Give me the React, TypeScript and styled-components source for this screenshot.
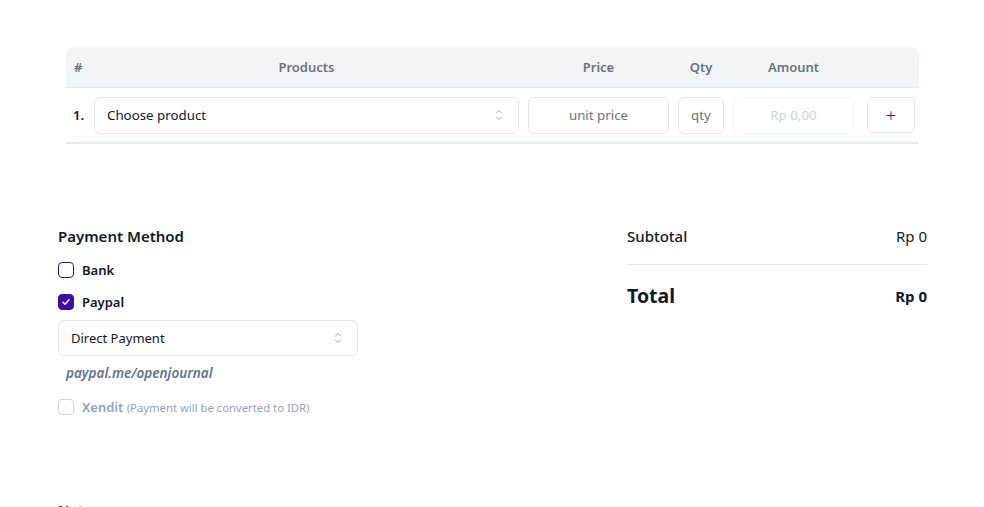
import styled, { createGlobalStyle } from "styled-components";

const GlobalStyle = createGlobalStyle`
  * { box-sizing: border-box; }
  body {
    margin: 0;
    background: #fff;
    font-family: "Noto Sans", "Open Sans", Arial, sans-serif;
    color: #111827;
  }
`;

const Chevrons = () => (
  <svg width="10" height="14" viewBox="0 0 10 14" fill="none">
    <path d="M2.5 5 L5 2.5 L7.5 5" stroke="#9ca3af" strokeWidth="1" strokeLinecap="round" strokeLinejoin="round" />
    <path d="M2.5 9 L5 11.5 L7.5 9" stroke="#9ca3af" strokeWidth="1" strokeLinecap="round" strokeLinejoin="round" />
  </svg>
);

const Check = () => (
  <svg width="12" height="12" viewBox="0 0 12 12" fill="none">
    <path d="M3 6.3 L5 8.3 L9 3.8" stroke="#fff" strokeWidth="1.4" strokeLinecap="round" strokeLinejoin="round" />
  </svg>
);

export default function App() {
  return (
    <Page>
      <GlobalStyle />
      <Table>
        <HeadRow>
          <HeadCell align="left">#</HeadCell>
          <HeadCell>Products</HeadCell>
          <HeadCell>Price</HeadCell>
          <HeadCell>Qty</HeadCell>
          <HeadCell>Amount</HeadCell>
          <HeadCell />
        </HeadRow>
        <BodyRow>
          <RowNum>1.</RowNum>
          <SelectBox>
            <span>Choose product</span>
            <Chevrons />
          </SelectBox>
          <Field placeholder="unit price" />
          <Field placeholder="qty" />
          <Field placeholder="Rp 0,00" disabled />
          <AddCell>
            <AddButton>+</AddButton>
          </AddCell>
        </BodyRow>
      </Table>

      <Bottom>
        <PaymentCol>
          <SectionTitle>Payment Method</SectionTitle>
          <CheckRow>
            <Box />
            <CheckLabel>Bank</CheckLabel>
          </CheckRow>
          <CheckRow>
            <Box checked>
              <Check />
            </Box>
            <CheckLabel>Paypal</CheckLabel>
          </CheckRow>
          <PaySelect>
            <span>Direct Payment</span>
            <Chevrons />
          </PaySelect>
          <PaypalLink>paypal.me/openjournal</PaypalLink>
          <CheckRow>
            <Box disabled />
            <CheckLabel disabled>
              Xendit <Note>(Payment will be converted to IDR)</Note>
            </CheckLabel>
          </CheckRow>
        </PaymentCol>

        <TotalsCol>
          <SumRow>
            <span>Subtotal</span>
            <span>Rp 0</span>
          </SumRow>
          <Divider />
          <TotalRow>
            <TotalLabel>Total</TotalLabel>
            <TotalValue>Rp 0</TotalValue>
          </TotalRow>
        </TotalsCol>
      </Bottom>

      <NotesLabel>Notes</NotesLabel>
    </Page>
  );
}

const Page = styled.div`
  padding: 47px 57px 40px 58px;
`;

const Table = styled.div`
  margin: 0 8px;
  border-bottom: 2px solid #e2e8f0;
`;

const grid = `
  display: grid;
  grid-template-columns: 19px 425px 141px 46px 121px 1fr;
  column-gap: 9px;
  align-items: center;
`;

const HeadRow = styled.div`
  ${grid}
  height: 41px;
  background: #f1f5f9;
  border-bottom: 1px solid #e2e8f0;
  border-radius: 8px 8px 0 0;
`;

const HeadCell = styled.div<{ align?: string }>`
  text-align: ${(p) => p.align || "center"};
  padding-left: ${(p) => (p.align === "left" ? "8px" : "0")};
  font-size: 13px;
  font-weight: 600;
  color: #6b7280;
  line-height: 20px;
  margin-top: -1px;
`;

const BodyRow = styled.div`
  ${grid}
  height: 54px;
`;

const RowNum = styled.div`
  padding-left: 7px;
  font-size: 13px;
  font-weight: 600;
  color: #111827;
  white-space: nowrap;
`;

const SelectBox = styled.div`
  height: 37px;
  display: flex;
  align-items: center;
  justify-content: space-between;
  padding: 0 14px 0 12px;
  border: 1px solid #e2e8f0;
  border-radius: 6px;
  font-size: 13.3px;
  color: #111827;
`;

const Field = styled.input`
  width: 100%;
  height: 37px;
  border: 1px solid ${(p) => (p.disabled ? "#f1f5f9" : "#e2e8f0")};
  border-radius: 6px;
  background: #fff;
  text-align: center;
  font-family: inherit;
  font-size: 13.3px;
  outline: none;
  &::placeholder {
    color: ${(p) => (p.disabled ? "#cbd5e1" : "#6b7280")};
  }
`;

const AddCell = styled.div`
  padding: 0 4px;
`;

const AddButton = styled.button`
  width: 48px;
  height: 36px;
  border: 1px solid #e2e8f0;
  border-radius: 6px;
  background: #fff;
  color: #3b0ea3;
  font-family: inherit;
  font-size: 18px;
  font-weight: 300;
  line-height: 1;
  cursor: pointer;
`;

const Bottom = styled.div`
  display: flex;
  justify-content: space-between;
  margin-top: 81px;
`;

const PaymentCol = styled.div`
  width: 300px;
  display: flex;
  flex-direction: column;
`;

const SectionTitle = styled.div`
  font-size: 15px;
  font-weight: 600;
  line-height: 22px;
  margin-bottom: 7px;
`;

const CheckRow = styled.div`
  display: flex;
  align-items: center;
  gap: 8px;
  height: 32px;
`;

const Box = styled.div<{ checked?: boolean; disabled?: boolean }>`
  width: 16px;
  height: 16px;
  border-radius: 4px;
  display: flex;
  align-items: center;
  justify-content: center;
  border: 1.5px solid
    ${(p) => (p.disabled ? "#cbd5e1" : "#3b0ea3")};
  background: ${(p) => (p.checked ? "#3b0ea3" : "#fff")};
`;

const CheckLabel = styled.span<{ disabled?: boolean }>`
  font-size: 13px;
  font-weight: 600;
  color: ${(p) => (p.disabled ? "#94a3b8" : "#111827")};
`;

const Note = styled.span`
  font-size: 11.3px;
  font-weight: 400;
  color: #94a3b8;
`;

const PaySelect = styled(SelectBox)`
  height: 36px;
  margin-top: 2px;
  font-size: 13px;
`;

const PaypalLink = styled.div`
  padding-left: 8px;
  margin: 6px 0 7px;
  font-size: 13.5px;
  font-weight: 600;
  font-style: italic;
  color: #64748b;
  line-height: 22px;
`;

const TotalsCol = styled.div`
  width: 300px;
  display: flex;
  flex-direction: column;
`;

const SumRow = styled.div`
  display: flex;
  justify-content: space-between;
  align-items: center;
  font-size: 15px;
  line-height: 22px;
  padding-bottom: 17px;
  & > span:first-child {
    font-weight: 500;
  }
`;

const Divider = styled.div`
  height: 1px;
  background: #e2e8f0;
`;

const TotalRow = styled.div`
  display: flex;
  justify-content: space-between;
  align-items: center;
  margin-top: 17px;
`;

const TotalLabel = styled.span`
  font-size: 19.5px;
  font-weight: 700;
`;

const TotalValue = styled.span`
  font-size: 15px;
  font-weight: 700;
`;

const NotesLabel = styled.div`
  margin-top: 78px;
  font-size: 14px;
  font-weight: 600;
`;
